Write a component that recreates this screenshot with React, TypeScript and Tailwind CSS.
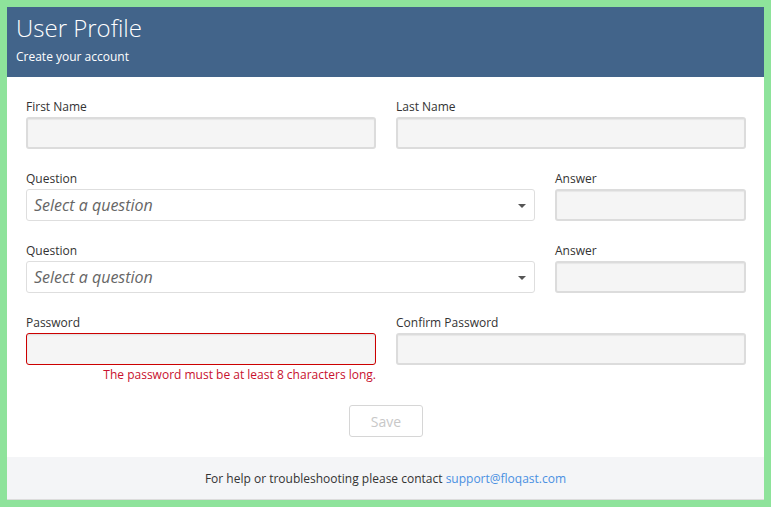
import React from "react";

function Label({ children }: { children: React.ReactNode }) {
    return <label className="block text-[12px] leading-[19px] text-[#333] mb-[1px]">{children}</label>;
}

function TextInput({ error }: { error?: boolean }) {
    return (
        <input
            type="text"
            className={
                error
                    ? "block w-full h-[32px] rounded-[3px] border border-[#c00] bg-[#f5f5f5] shadow-[inset_0_1px_2px_rgba(0,0,0,0.1)] outline-none"
                    : "block w-full h-[32px] rounded-[3px] border-2 border-[#dcdcdc] bg-[#f5f5f5] shadow-[inset_0_1px_1px_rgba(0,0,0,0.06)] outline-none"
            }
        />
    );
}

function QuestionSelect() {
    return (
        <div className="relative flex items-center h-[32px] rounded-[3px] border border-[#dedede] bg-white pl-[7px]">
            <span className="italic text-[16px] text-[#666]">Select a question</span>
            <span className="absolute right-[8px] top-[14px] w-0 h-0 border-l-[4px] border-r-[4px] border-t-[4px] border-l-transparent border-r-transparent border-t-[#555]" />
        </div>
    );
}

export default function App() {
    return (
        <div className="min-h-[507px] bg-[#8ee39b] pt-[7px] pl-[7px] pr-[7px] pb-[7px] font-['Open_Sans',sans-serif]">
            <div className="w-[757px] bg-white border-b border-[#dcdcdc]">
                <header className="h-[70px] bg-[#42648a] px-[9px] pt-[6px] text-white">
                    <h1 className="text-[24px] leading-[30px] font-light">User Profile</h1>
                    <p className="text-[12px] leading-[18px] mt-[5px]">Create your account</p>
                </header>

                <div className="pl-[19px] pr-[18px] pt-[20px] pb-[20px]">
                    <div className="grid grid-cols-2 gap-x-[20px]">
                        <div>
                            <Label>First Name</Label>
                            <TextInput />
                        </div>
                        <div>
                            <Label>Last Name</Label>
                            <TextInput />
                        </div>
                    </div>

                    <div className="grid grid-cols-[509px_191px] gap-x-[20px] mt-[20px]">
                        <div>
                            <Label>Question</Label>
                            <QuestionSelect />
                        </div>
                        <div>
                            <Label>Answer</Label>
                            <TextInput />
                        </div>
                    </div>

                    <div className="grid grid-cols-[509px_191px] gap-x-[20px] mt-[20px]">
                        <div>
                            <Label>Question</Label>
                            <QuestionSelect />
                        </div>
                        <div>
                            <Label>Answer</Label>
                            <TextInput />
                        </div>
                    </div>

                    <div className="grid grid-cols-2 gap-x-[20px] mt-[20px]">
                        <div>
                            <Label>Password</Label>
                            <TextInput error />
                            <p className="mt-[2px] text-right text-[12px] leading-[16px] text-[#c8102e]">
                                The password must be at least 8 characters long.
                            </p>
                        </div>
                        <div>
                            <Label>Confirm Password</Label>
                            <TextInput />
                        </div>
                    </div>

                    <div className="flex justify-center mt-[22px]">
                        <button
                            disabled
                            className="w-[74px] h-[32px] rounded-[3px] border border-[#d6d6d6] bg-white text-[14px] text-[#c8c8c8]"
                        >
                            Save
                        </button>
                    </div>
                </div>

                <footer className="h-[42px] bg-[#f4f5f7] flex items-center justify-center text-[12px] text-[#333] pt-[1px]">
                    <span>
                        For help or troubleshooting please contact{" "}
                        <a href="#" className="text-[#4a90e2]">support@floqast.com</a>
                    </span>
                </footer>
            </div>
        </div>
    );
}
